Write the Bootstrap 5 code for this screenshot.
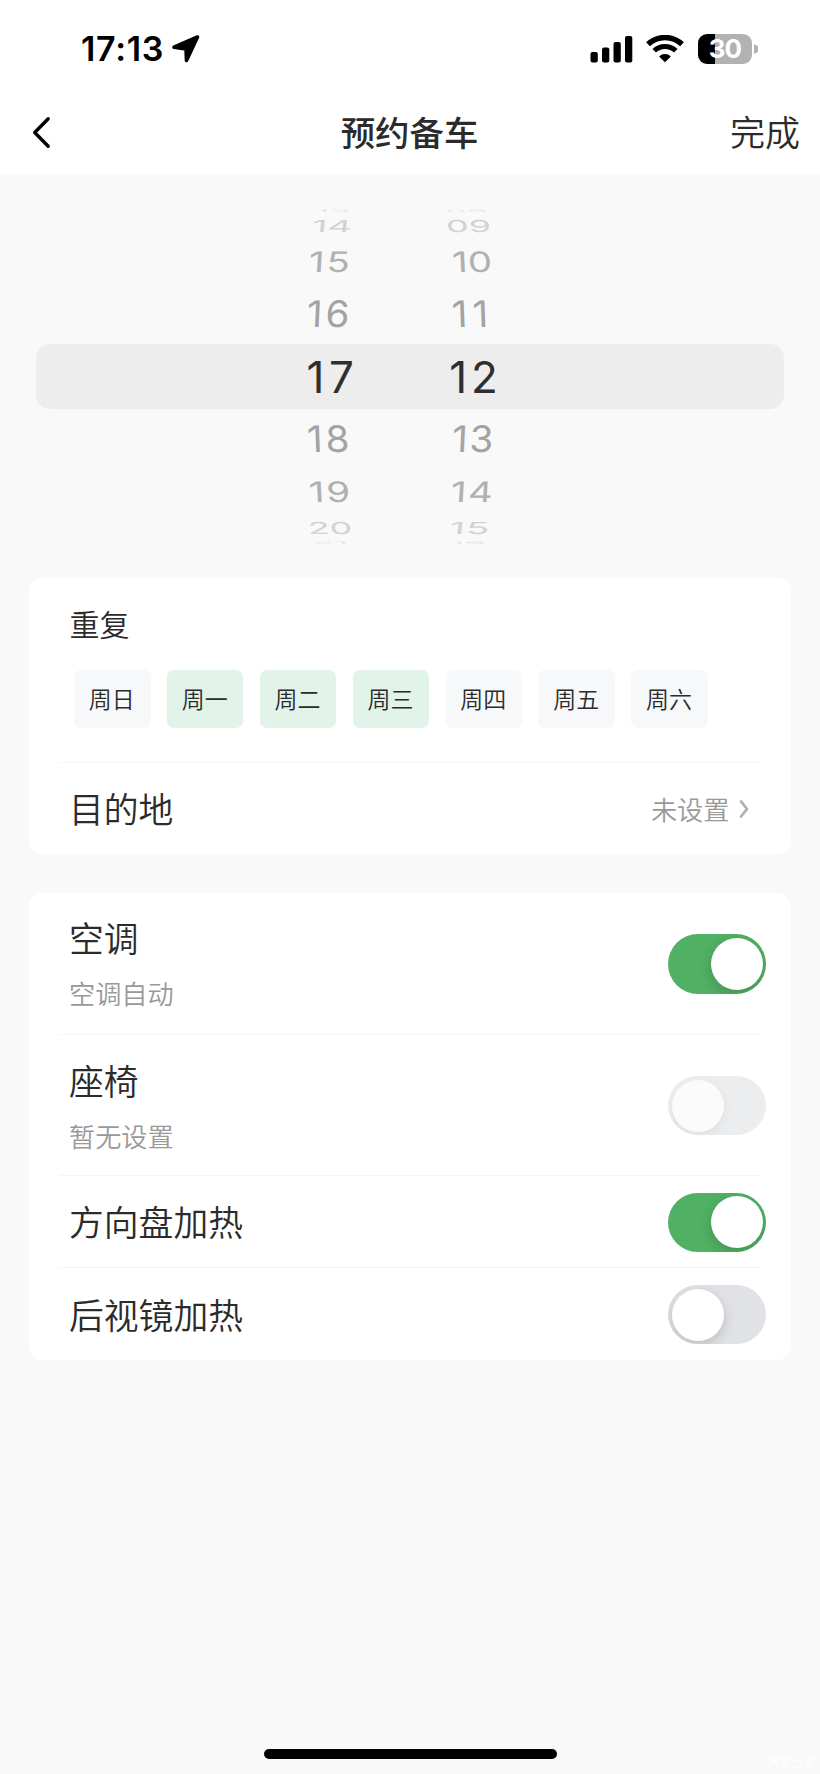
<!DOCTYPE html>
<html lang="zh-CN">
<head>
<meta charset="utf-8">
<meta name="viewport" content="width=device-width, initial-scale=1">
<title>预约备车</title>
<link href="https://cdn.jsdelivr.net/npm/bootstrap@5.3.0/dist/css/bootstrap.min.css" rel="stylesheet">
<style>
html,body{height:100%}
body{background:#f9f9f9;color:#2b2b2b;font-family:"Noto Sans CJK SC",sans-serif;font-weight:350;overflow:hidden}
.screen{width:820px;height:1774px}
.status{height:96px;padding:1px 62px 0 81px;color:#000}
.clock{font:600 34px/40px Inter,sans-serif;letter-spacing:.7px}
.batt{width:54px;height:30px;border-radius:9px;background:linear-gradient(90deg,#000 31%,#b2b2b2 31%);color:#fff;font:700 26px/30px Inter,sans-serif;letter-spacing:-1px}
.topbar{height:78px;padding:0 20px 8px 32px;font-size:35px;line-height:50px}
.topbar .side{flex:1 1 0}
.topbar .title{font-weight:500;font-size:34.4px;margin-left:-13px}
.wheel{margin-top:35.2px;height:335.8px;font-family:Inter,sans-serif;font-weight:400;font-size:38.5px;color:#a3a3a3}
.selband{left:36px;right:36.5px;top:134.8px;height:65px;border-radius:14px;background:#ededed}
.wheel .slot{line-height:1;white-space:nowrap}
.slot span{letter-spacing:var(--ls,0px);transform:translateX(var(--dx,0px)) scale(var(--sx,1),var(--sy,1)) skewX(var(--k,0deg))}
.slot .h{width:80px;margin-left:288px;text-align:center}
.slot .m{width:80px;margin-left:64px;text-align:center}
.up .h,.down .m{--k:-2.5deg}
.down .h,.up .m{--k:2deg}
.w0{height:64px;font-size:44px;color:#2f2f2f}
.w1{height:60.6px;--sy:.95}
.w2{height:45px;--sy:.73;color:#b0b0b0}
.w3{height:26.7px;--sy:.43;color:#d2d2d2}
.w4{height:3.4px;--sy:.09;--sx:.9;color:#e6e6e6}
.panel{margin:0 29px;border-radius:14px;background:#fff;padding:0 30.5px}
.rowline{border-bottom:1.5px solid #f5f5f6}
.lbl{font-size:34.8px;line-height:50px}
.single{padding-bottom:1px}
.sub{font-size:26.2px;line-height:38px;color:#999}
.day{width:76.5px;height:57.5px;border-radius:7px;background:#f7f8fa;font-size:23px;line-height:1;padding:0 1px 2px 0}
.day.on{background:#e2f4e9}
.tgl{width:98px;height:59.5px;border-radius:30px;padding:3.5px;background:#e1e2e6;overflow:hidden;margin:1px -5.5px 0 0}
.tgl i{width:52px;height:52px;border-radius:50%;background:#fff;box-shadow:0 4px 12px rgba(0,0,0,.17)}
.tgl.on{background:#50b063;justify-content:flex-end}
.tgl.dim{background:#ecedef}
.tgl.dim i{background:#fbfbfb;box-shadow:0 4px 12px rgba(0,0,0,.06)}
.homebar{width:293px;height:10px;border-radius:5px;background:#000}
.stamp{right:4px;bottom:2px;font-size:12.3px;line-height:18px;color:#fff}
</style>
</head>
<body>
<div class="screen position-relative d-flex flex-column">
  <header class="bg-white">
    <div class="status d-flex align-items-center">
      <span class="clock">17:13</span>
      <svg width="30" height="30" viewBox="0 0 30 30" style="margin-left:7px"><path d="M3 13.200 26.500 3 15.500 26.500 15 15z" fill="#000" stroke="#000" stroke-width="3.600" stroke-linejoin="round"/></svg>
      <svg class="ms-auto" width="43" height="28" viewBox="0 0 43 28"><rect x=".5" y="17" width="7.3" height="10.5" rx="2"/><rect x="12" y="12.5" width="7.3" height="15" rx="2"/><rect x="23.5" y="7" width="7.3" height="20.5" rx="2"/><rect x="35" y="1" width="7.3" height="26.5" rx="2"/></svg>
      <svg width="38" height="28" viewBox="0 0 38 28" style="margin-left:13px"><g fill="none" stroke="#000"><path d="M2 9.3a24.5 24.5 0 0 1 34 0" stroke-width="5.4"/><path d="M8.2 15.8a15.6 15.6 0 0 1 21.6 0" stroke-width="5"/></g><path d="M19 27.2 13.1 21.5a8.4 8.4 0 0 1 11.8 0z"/></svg>
      <span class="batt d-flex align-items-center justify-content-center" style="margin-left:14px">30</span>
      <svg width="6" height="10" viewBox="0 0 6 10"><path d="M2 .5a4.500 4.500 0 0 1 0 9z" fill="#b2b2b2"/></svg>
    </div>
    <div class="topbar d-flex align-items-center">
      <div class="side"><svg class="d-block mt-1" width="20" height="34" viewBox="0 0 20 34"><path d="M16.2 2.700 2.7 16.500l13.5 13.700" fill="none" stroke="#000" stroke-width="3.4" stroke-linecap="round" stroke-linejoin="round"/></svg></div>
      <div class="title">预约备车</div>
      <div class="side text-end">完成</div>
    </div>
  </header>

  <section class="wheel position-relative">
    <div class="selband position-absolute"></div>
    <div class="position-relative">
      <div class="slot w4 up d-flex align-items-center"><span class="h" style="--dx:5px">13</span><span class="m" style="--dx:-5.500px">08</span></div>
      <div class="slot w3 up d-flex align-items-center"><span class="h" style="--dx:4px">14</span><span class="m" style="--dx:-3.500px;--sx:.93">09</span></div>
      <div class="slot w2 up d-flex align-items-center"><span class="h" style="--dx:2.500px;--ls:2px">15</span><span class="m">10</span></div>
      <div class="slot w1 up d-flex align-items-center"><span class="h" style="--dx:1.700px;--ls:3px">16</span><span class="m" style="--dx:.5px;--ls:5px">11</span></div>
      <div class="slot w0 d-flex align-items-center"><span class="h" style="--dx:4.500px;--ls:4.500px">17</span><span class="m" style="--dx:3.600px;--ls:4px">12</span></div>
      <div class="slot w1 down d-flex align-items-center"><span class="h" style="--dx:1.700px;--ls:3px">18</span><span class="m" style="--dx:1.800px;--ls:2px">13</span></div>
      <div class="slot w2 down d-flex align-items-center"><span class="h" style="--dx:2.500px;--ls:2px">19</span><span class="m" style="--dx:.7px;--ls:1.500px">14</span></div>
      <div class="slot w3 down d-flex align-items-center"><span class="h" style="--dx:2px;--sx:.93">20</span><span class="m" style="--dx:-2px;--ls:1px">15</span></div>
      <div class="slot w4 down d-flex align-items-center"><span class="h" style="--dx:2.500px">21</span><span class="m" style="--dx:-4px">16</span></div>
    </div>
  </section>

  <section class="panel" style="margin-top:33.5px">
    <div class="rowline" style="height:184.5px;padding:24px 0 0 10px">
      <div style="font-size:30px;line-height:42px">重复</div>
      <div class="d-flex" style="margin:26px 0 0 4.5px;gap:16.4px">
        <span class="day d-flex align-items-center justify-content-center">周日</span>
        <span class="day on d-flex align-items-center justify-content-center">周一</span>
        <span class="day on d-flex align-items-center justify-content-center">周二</span>
        <span class="day on d-flex align-items-center justify-content-center">周三</span>
        <span class="day d-flex align-items-center justify-content-center">周四</span>
        <span class="day d-flex align-items-center justify-content-center">周五</span>
        <span class="day d-flex align-items-center justify-content-center">周六</span>
      </div>
    </div>
    <div class="d-flex align-items-center" style="height:91.5px;padding:0 10.5px 0 9.5px">
      <span class="lbl single">目的地</span>
      <span class="sub ms-auto">未设置</span>
      <svg width="12" height="20" viewBox="0 0 12 20" style="margin-left:8.5px"><path d="M3 2.500 9 10l-6 7.500" fill="none" stroke="#b0b0b0" stroke-width="2.800" stroke-linecap="round" stroke-linejoin="round"/></svg>
    </div>
  </section>

  <section class="panel" style="margin-top:38.5px">
    <div class="rowline d-flex align-items-center" style="height:142px;padding-left:9.5px">
      <div style="padding-bottom:2px"><div class="lbl">空调</div><div class="sub" style="margin-top:12px">空调自动</div></div>
      <span class="tgl on d-flex align-items-center ms-auto"><i></i></span>
    </div>
    <div class="rowline d-flex align-items-center" style="height:141.5px;padding-left:9.5px">
      <div style="padding-bottom:1px"><div class="lbl">座椅</div><div class="sub" style="margin-top:12px">暂无设置</div></div>
      <span class="tgl dim d-flex align-items-center ms-auto"><i></i></span>
    </div>
    <div class="rowline d-flex align-items-center" style="height:92px;padding-left:9.5px">
      <span class="lbl single">方向盘加热</span>
      <span class="tgl on d-flex align-items-center ms-auto"><i></i></span>
    </div>
    <div class="d-flex align-items-center" style="height:91.5px;padding-left:9.5px">
      <span class="lbl single">后视镜加热</span>
      <span class="tgl d-flex align-items-center ms-auto"><i></i></span>
    </div>
  </section>

  <div class="homebar mt-auto mx-auto" style="margin-bottom:15px"></div>
  <div class="stamp position-absolute">汽车之家</div>
</div>
<script src="https://cdn.jsdelivr.net/npm/bootstrap@5.3.0/dist/js/bootstrap.bundle.min.js"></script>
</body>
</html>
